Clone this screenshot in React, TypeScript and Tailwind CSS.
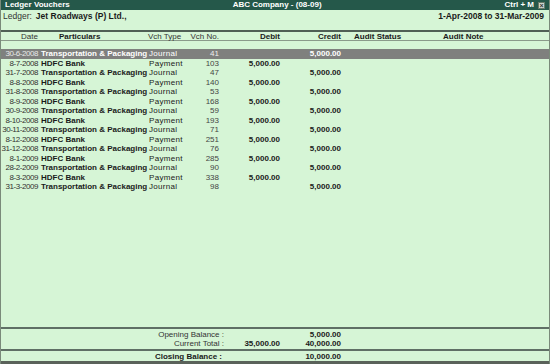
import React from 'react';

type Row = {
  date: string;
  particulars: string;
  type: string;
  no: string;
  debit?: string;
  credit?: string;
};

const rows: Row[] = [
  { date: '30-6-2008', particulars: 'Transportation & Packaging', type: 'Journal', no: '41', credit: '5,000.00' },
  { date: '8-7-2008', particulars: 'HDFC Bank', type: 'Payment', no: '103', debit: '5,000.00' },
  { date: '31-7-2008', particulars: 'Transportation & Packaging', type: 'Journal', no: '47', credit: '5,000.00' },
  { date: '8-8-2008', particulars: 'HDFC Bank', type: 'Payment', no: '140', debit: '5,000.00' },
  { date: '31-8-2008', particulars: 'Transportation & Packaging', type: 'Journal', no: '53', credit: '5,000.00' },
  { date: '8-9-2008', particulars: 'HDFC Bank', type: 'Payment', no: '168', debit: '5,000.00' },
  { date: '30-9-2008', particulars: 'Transportation & Packaging', type: 'Journal', no: '59', credit: '5,000.00' },
  { date: '8-10-2008', particulars: 'HDFC Bank', type: 'Payment', no: '193', debit: '5,000.00' },
  { date: '30-11-2008', particulars: 'Transportation & Packaging', type: 'Journal', no: '71', credit: '5,000.00' },
  { date: '8-12-2008', particulars: 'HDFC Bank', type: 'Payment', no: '251', debit: '5,000.00' },
  { date: '31-12-2008', particulars: 'Transportation & Packaging', type: 'Journal', no: '76', credit: '5,000.00' },
  { date: '8-1-2009', particulars: 'HDFC Bank', type: 'Payment', no: '285', debit: '5,000.00' },
  { date: '28-2-2009', particulars: 'Transportation & Packaging', type: 'Journal', no: '90', credit: '5,000.00' },
  { date: '8-3-2009', particulars: 'HDFC Bank', type: 'Payment', no: '338', debit: '5,000.00' },
  { date: '31-3-2009', particulars: 'Transportation & Packaging', type: 'Journal', no: '98', credit: '5,000.00' },
];

const cols = 'grid grid-cols-[37px_110px_42px_30px_61px_60px_102px_1fr]';

export default function App() {
  return (
    <div className="w-[550px] h-[364px] bg-[#d6f5d6] border-x border-[#7a8a7a] flex flex-col font-['Liberation_Sans',Arial,sans-serif] text-[#1a1a1a] overflow-hidden">
      {/* Title bar */}
      <div className="h-[10px] bg-[#25584a] flex items-center px-[4px] text-white font-bold text-[8px] leading-[10px]">
        <span>Ledger Vouchers</span>
        <span className="flex-1 text-center pr-[20px]">ABC Company - (08-09)</span>
        <span className="pr-[4px]">Ctrl + M</span>
        <span className="w-[7px] h-[7px] bg-[#cfd8cf] border border-[#6a7a6a] text-[#333] text-[7px] leading-[5px] flex items-center justify-center">×</span>
      </div>

      {/* Ledger info */}
      <div className="h-[20px] flex items-start pt-[1px] px-[2px] text-[8.5px] leading-[10px]">
        <span className="text-[#333]">Ledger:</span>
        <span className="font-bold pl-[4px]">Jet Roadways (P) Ltd.,</span>
        <span className="flex-1" />
        <span className="font-bold pr-[3px]">1-Apr-2008 to 31-Mar-2009</span>
      </div>

      {/* Column header */}
      <div className={`${cols} h-[11px] border-t-2 border-[#4f5f55] border-b border-b-[#8a9a8a] text-[8px] leading-[9px] items-center`}>
        <span className="text-right text-[#333]">Date</span>
        <span className="font-bold pl-[21px]">Particulars</span>
        <span className="text-[#333]">Vch Type</span>
        <span className="text-right pr-[1px] text-[#333] whitespace-nowrap">Vch No.</span>
        <span className="text-right font-bold pr-[1px]">Debit</span>
        <span className="text-right font-bold">Credit</span>
        <span className="font-bold pl-[13px]">Audit Status</span>
        <span className="font-bold">Audit Note</span>
      </div>

      <div className="h-[8px]" />

      {/* Voucher rows */}
      <div className="flex flex-col">
        {rows.map((r, i) => {
          const sel = i === 0;
          return (
            <div
              key={i}
              className={`${cols} h-[9.5px] text-[8px] leading-[9.5px] whitespace-nowrap ${sel ? 'bg-[#7f807e] text-white' : ''}`}
            >
              <span className={`text-right tracking-[-0.45px] ${sel ? 'text-[#e8e8e8]' : 'text-[#333]'}`}>{r.date}</span>
              <span className="font-bold pl-[3px]">{r.particulars}</span>
              <span className="tracking-[0.3px] pl-[1px]">{r.type}</span>
              <span className={`text-right pr-[1px] ${sel ? 'text-[#eee]' : 'text-[#444]'}`}>{r.no}</span>
              <span className="text-right font-bold pr-[1px]">{r.debit ?? ''}</span>
              <span className="text-right font-bold">{r.credit ?? ''}</span>
              <span />
              <span />
            </div>
          );
        })}
      </div>

      <div className="flex-1" />

      {/* Totals */}
      <div className="border-t-2 border-[#5f6f65] text-[8px] leading-[9px] pt-[1px] pb-[1px]">
        <div className={cols}>
          <span />
          <span className="col-span-3 text-right -mr-[4px] text-[#333] whitespace-nowrap">Opening Balance :</span>
          <span />
          <span className="text-right font-bold">5,000.00</span>
        </div>
        <div className={cols}>
          <span />
          <span className="col-span-3 text-right -mr-[4px] text-[#333] whitespace-nowrap">Current Total :</span>
          <span className="text-right font-bold pr-[1px]">35,000.00</span>
          <span className="text-right font-bold">40,000.00</span>
        </div>
      </div>
      <div className={`${cols} border-t-2 border-[#5f6f65] border-b-[3px] border-b-[#5a625a] text-[8px] leading-[9px] pt-[1px]`}>
        <span />
        <span className="col-span-3 text-right -mr-[2px] font-bold whitespace-nowrap">Closing Balance :</span>
        <span />
        <span className="text-right font-bold">10,000.00</span>
      </div>
    </div>
  );
}
